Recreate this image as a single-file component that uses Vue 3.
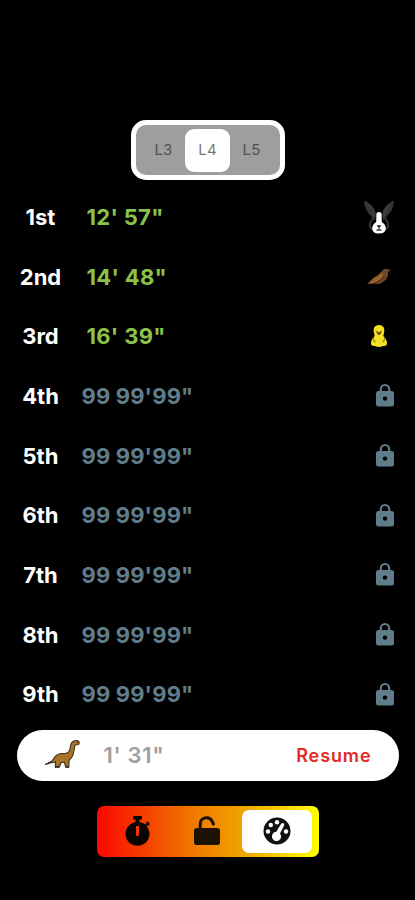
<script setup>
const levels = ['L3', 'L4', 'L5']
const activeLevel = 'L4'
const records = [
  { rank: '1st', time: '12\' 57"', icon: 'rabbit' },
  { rank: '2nd', time: '14\' 48"', icon: 'bird' },
  { rank: '3rd', time: '16\' 39"', icon: 'chick' },
  ...[4, 5, 6, 7, 8, 9].map((n) => ({ rank: n + 'th', time: '99 99\'99"', icon: 'lock' })),
]
</script>

<template>
  <main class="screen">
    <div class="levels">
      <button v-for="l in levels" :key="l" class="level" :class="{ active: l === activeLevel }">{{ l }}</button>
    </div>

    <section class="list">
      <div v-for="r in records" :key="r.rank" class="row" :class="{ locked: r.icon === 'lock' }">
        <span class="rank">{{ r.rank }}</span>
        <span class="time">{{ r.time }}</span>
        <span class="symbol">
          <svg v-if="r.icon === 'rabbit'" width="32" height="36" viewBox="0 0 32 36">
            <path d="M1 3Q2 1 4 3Q12 8 13 15L12 21Q9 20 8 17Q2 12 1 3ZM31 3Q30 1 28 3Q20 8 19 15L20 21Q23 20 24 17Q30 12 31 3Z" fill="#353535" />
            <path d="M5 5Q10 10 11 17M27 5Q22 10 21 17" stroke="#484848" fill="none" />
            <path d="M10 19Q6 24 7 28L10 31M22 19Q26 24 25 28L22 31" stroke="#343434" stroke-width="2" fill="none" />
            <path d="M13.4 15Q13.4 13 16 13Q18.6 13 18.6 15L18.8 23Q22.3 25 22.8 29Q23 34.5 16 34.5Q9 34.5 9.2 29Q9.7 25 13.2 23Z" fill="#fff" />
            <path d="M14.3 26.5H17.7L16 28.8ZM16 28V31M13.3 31.5Q14.7 30 16 31Q17.3 30 18.7 31.5" fill="#222" stroke="#222" stroke-width=".8" />
          </svg>
          <svg v-else-if="r.icon === 'bird'" width="26" height="20" viewBox="0 0 26 20">
            <path d="M1 17L7 11Q12 9 16 4Q18 1 21 2L25 3L22 5Q23 11 17 15Q13 18 10 16.5Z" fill="#714526" />
            <path d="M2 16.5L8 11.5Q12 9 16 6Q18 8 15 12Q11 15 7 16Z" fill="#94652a" />
            <path d="M9 16Q16 14 18 9" stroke="#54331b" stroke-width="1.3" fill="none" />
          </svg>
          <svg v-else-if="r.icon === 'chick'" width="18" height="24" viewBox="0 0 18 24">
            <path d="M9 1C14 1 15 5 14 9L13.3 12Q17 15 17 20Q16.5 22 13 22Q9 24 5 22Q1.5 22 1 20Q1 15 4.7 12L4 9C3 5 4 1 9 1Z" fill="#f4df22" />
            <path d="M6.4 6.5L9 8.6L11.6 6.5Q11.6 10.7 9 11Q6.4 10.7 6.4 6.5Z" fill="#6a4c14" />
            <path d="M3.5 13Q3 17 5.5 18M14.5 13Q15 17 12.5 18" stroke="#8c7a18" stroke-width="1.1" fill="none" />
          </svg>
          <svg v-else width="18" height="24" viewBox="0 0 18 24">
            <path fill="#607d8b" fill-rule="evenodd" d="M3.7 8V6.2A5.3 5.3 0 0 1 14.3 6.2V8H15.5Q18 8 18 10.3V21Q18 23.5 15.5 23.5H2.5Q0 23.5 0 21V10.3Q0 8 2.5 8ZM5.9 8H12.1V6.2A3.1 3.1 0 0 0 5.9 6.2ZM9 13.4A2.2 2.2 0 1 0 9 17.8A2.2 2.2 0 1 0 9 13.4Z" />
          </svg>
        </span>
      </div>
    </section>

    <section class="current">
      <svg class="dino" width="38" height="32" viewBox="0 0 38 32">
        <path d="M4 24Q8 23 9.5 20Q12 14.5 19 14.5Q25 15 26 10Q26.3 2 31.5 1.5Q35 1 35.3 4L34.5 5.5L31 6Q30.5 9 29.5 14Q28.5 19 25.2 21L24.8 28H21.7L20.5 23.5H17L15.5 28H11.3L11.5 23Q8 24 4 24Z" fill="#a97229" stroke="#3a301f" stroke-width="1.1" stroke-linejoin="round" />
        <path d="M1 25.3Q4 25 7 23M11 28H15M21.5 28H25M33 3.2H34.2" stroke="#24292c" stroke-width="1.3" fill="none" />
      </svg>
      <span class="elapsed">1' 31"</span>
      <button class="resume">Resume</button>
    </section>

    <nav class="tabs">
      <button class="tab">
        <svg width="26" height="30" viewBox="0 0 26 30">
          <path fill="#0b0500" fill-rule="evenodd" d="M8 1Q8 0 9 0H16Q17 0 17 1V2.5Q17 3.5 16 3.5H14.5V6Q18 6.6 20.4 8.6L21.5 7.5L20.6 6.6L22.6 5.5L25 8L23.6 9.8L22.7 9L21.8 10.3A12 12 0 1 1 10.5 6V3.5H9Q8 3.5 8 2.5ZM11.3 10Q11 10 11 11V19Q11 20 12.5 20Q14 20 14 19V11Q14 10 13 10Z" />
        </svg>
      </button>
      <button class="tab">
        <svg width="28" height="30" viewBox="0 0 28 30">
          <path d="M7.2 13V7.8A6.3 6.3 0 0 1 19.2 5.4L20.4 8" fill="none" stroke="#1a1100" stroke-width="3" stroke-linecap="round" />
          <rect x="1" y="12" width="26" height="17" rx="2.8" fill="#1d1303" />
        </svg>
      </button>
      <button class="tab active">
        <svg width="28" height="28" viewBox="0 0 28 28">
          <circle cx="14" cy="14" r="13.5" fill="#111" />
          <g fill="#fff">
            <circle cx="5" cy="14.5" r="2.2" />
            <circle cx="7.8" cy="8" r="2.2" />
            <circle cx="14" cy="5.3" r="2.2" />
            <circle cx="23" cy="14.5" r="2.2" />
            <path d="M18.2 6.8Q19.2 5.5 20.5 6.2Q21.7 7 21.1 8.4L17 16.4A4.6 4.6 0 1 1 13.2 14.8Z" />
          </g>
        </svg>
      </button>
    </nav>
  </main>
</template>

<style>
body { background: #000; }
</style>

<style scoped>
.screen {
  box-sizing: border-box;
  width: 415px;
  height: 900px;
  padding-top: 120px;
  background: #000;
  display: flex;
  flex-direction: column;
  align-items: center;
  overflow: hidden;
  font-family: Inter, "Liberation Sans", sans-serif;
}
button { border: 0; padding: 0; background: none; font: inherit; }
.levels {
  box-sizing: border-box;
  width: 154px;
  height: 60px;
  border: 5px solid #fff;
  border-radius: 15px;
  background: #9e9e9e;
  display: flex;
  justify-content: center;
  align-items: center;
}
.level {
  width: 43.5px;
  height: 43px;
  padding-bottom: 2px;
  border-radius: 9px;
  color: #505050;
  font-size: 15px;
  letter-spacing: .2px;
}
.level.active { background: #fff; color: #777; width: 44.5px; }
.list { width: 415px; margin-top: 7px; }
.row { height: 59.7px; display: flex; align-items: center; }
.rank {
  width: 81px;
  text-align: center;
  color: #fff;
  font-size: 22px;
  font-weight: 700;
}
.time {
  flex: 1;
  padding-left: 5.5px;
  color: #8bc34a;
  font-size: 22px;
  font-weight: 700;
  letter-spacing: .3px;
  white-space: nowrap;
}
.locked .time { padding-left: .5px; color: #607d8b; letter-spacing: .15px; }
.symbol { width: 32px; margin-right: 20px; display: flex; justify-content: center; }
.locked .symbol { margin-right: 13.5px; }
.locked svg { margin: 0 1px 1px 0; }
.current {
  box-sizing: border-box;
  width: 382px;
  height: 51px;
  margin-top: 5.5px;
  padding: 0 27px;
  border-radius: 26px;
  background: #fff;
  display: flex;
  align-items: center;
}
.elapsed {
  flex: 1;
  margin-left: 22px;
  font-size: 22px;
  font-weight: 600;
  letter-spacing: .7px;
  color: #9e9e9e;
}
.resume { color: #e52a25; font-size: 18px; font-weight: 600; letter-spacing: .9px; }
.tabs {
  box-sizing: border-box;
  width: 222px;
  height: 51px;
  margin-top: 25px;
  padding: 4px 7px 4px 6px;
  border-radius: 7px;
  background: linear-gradient(to right, #f90800, #f07c00 45%, #f0a800 68%, #ff0);
  display: flex;
}
.tab { flex: 1 1 0; min-width: 0; display: flex; align-items: center; justify-content: center; }
.tab:first-child svg { margin-left: 2px; }
.tab.active { background: #fff; border-radius: 7px; }
</style>
